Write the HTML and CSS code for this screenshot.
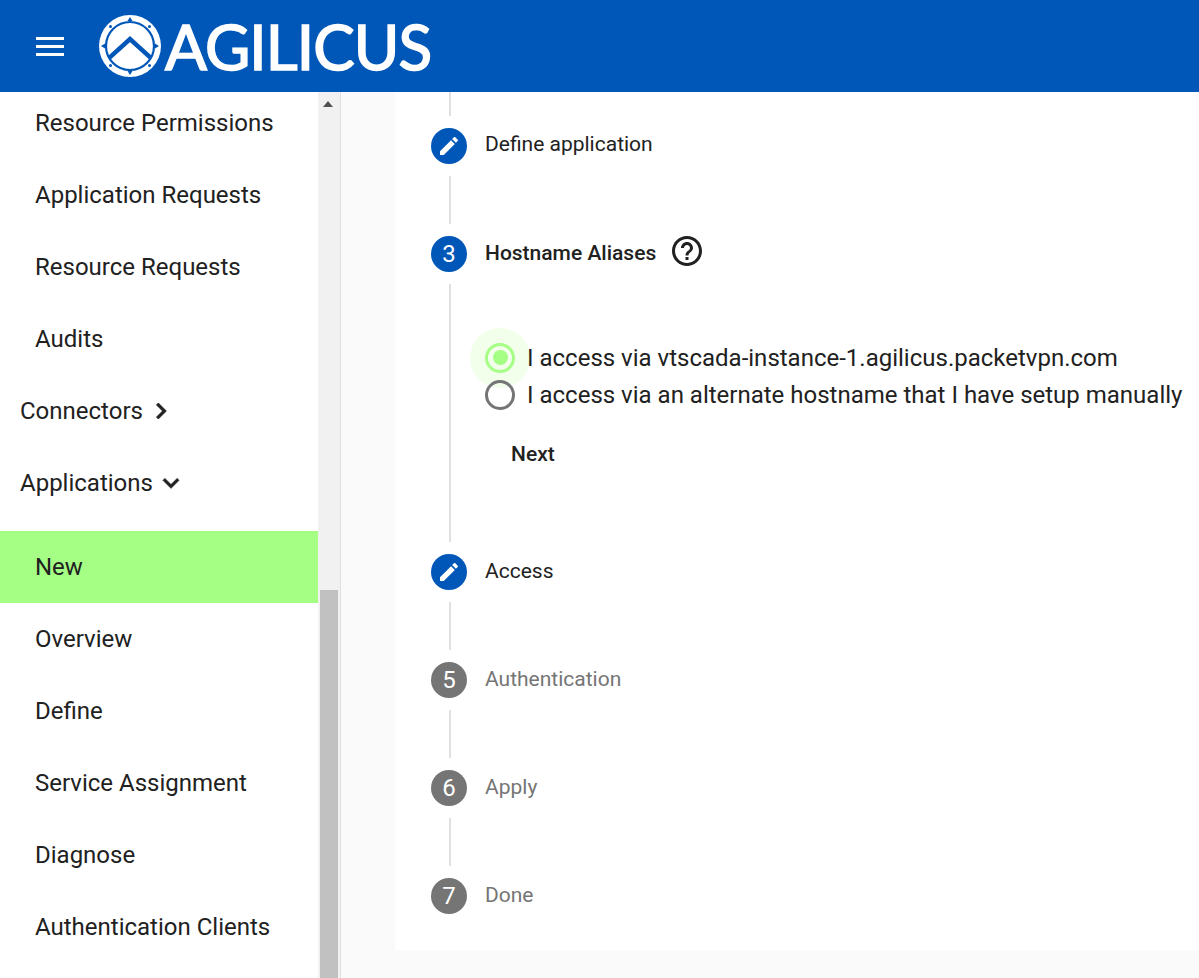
FILE: index.html
```html
<!DOCTYPE html>
<html lang="en">
<head>
  <meta charset="UTF-8">
  <meta name="viewport" content="width=device-width, initial-scale=1.0">
  <title>Agilicus</title>
  <link rel="stylesheet" href="styles.css">
</head>
<body>
  <header class="toolbar">
    <div class="menu-icon"><span></span><span></span><span></span></div>
    <svg class="logo-mark" width="64" height="64" viewBox="0 0 64 64">
      <circle cx="32" cy="32" r="31" fill="#fff"/>
      <circle cx="32" cy="32" r="24" fill="#fff" stroke="#0057b8" stroke-width="2.2"/>
      <path d="M11.5 43.6 L32 25 L52.5 43.6" fill="none" stroke="#0057b8" stroke-width="4.5"/>
      <path d="M32 3 l2.5 4 h-5z M32 61 l-2.5 -4 h5z M3 32 l4 -2.5 v5z M61 32 l-4 2.5 v-5z" fill="#0057b8"/>
      <circle cx="12.5" cy="12.5" r="1.5" fill="#0057b8"/>
      <circle cx="51.5" cy="12.5" r="1.5" fill="#0057b8"/>
      <circle cx="12.5" cy="51.5" r="1.5" fill="#0057b8"/>
      <circle cx="51.5" cy="51.5" r="1.5" fill="#0057b8"/>
    </svg>
    <span class="logo-text">AGILICUS</span>
  </header>

  <div class="layout">
    <nav class="sidebar">
      <div class="nav-list">
        <a class="nav-item sub">Resource Permissions</a>
        <a class="nav-item sub">Application Requests</a>
        <a class="nav-item sub">Resource Requests</a>
        <a class="nav-item sub">Audits</a>
        <a class="nav-item">Connectors
          <svg class="chevron" viewBox="0 0 24 24"><path d="M10 6L8.59 7.41 13.17 12l-4.58 4.59L10 18l6-6z"/></svg>
        </a>
        <a class="nav-item group-open">Applications
          <svg class="chevron" viewBox="0 0 24 24"><path d="M16.59 8.59L12 13.17 7.41 8.59 6 10l6 6 6-6z"/></svg>
        </a>
        <a class="nav-item sub active">New</a>
        <a class="nav-item sub">Overview</a>
        <a class="nav-item sub">Define</a>
        <a class="nav-item sub">Service Assignment</a>
        <a class="nav-item sub">Diagnose</a>
        <a class="nav-item sub">Authentication Clients</a>
      </div>
    </nav>
    <div class="scrollbar">
      <div class="scroll-up"></div>
      <div class="scroll-thumb"></div>
    </div>

    <main class="content">
      <div class="card">
        <div class="step-line first"></div>

        <div class="step">
          <div class="step-icon blue">
            <svg class="edit-icon" viewBox="0 0 24 24"><path d="M3 17.25V21h3.75L17.81 9.94l-3.75-3.75L3 17.25zM20.71 7.04c.39-.39.39-1.02 0-1.41l-2.34-2.34c-.39-.39-1.02-.39-1.41 0l-1.83 1.83 3.75 3.75 1.83-1.83z"/></svg>
          </div>
          <div class="step-label raised">Define application</div>
        </div>
        <div class="step-line"></div>

        <div class="step">
          <div class="step-icon blue">3</div>
          <div class="step-label current">Hostname Aliases</div>
          <svg class="help-icon" viewBox="0 0 24 24"><path d="M11 18h2v-2h-2v2zm1-16C6.48 2 2 6.48 2 12s4.48 10 10 10 10-4.48 10-10S17.52 2 12 2zm0 18c-4.41 0-8-3.59-8-8s3.59-8 8-8 8 3.59 8 8-3.59 8-8 8zm0-14c-2.21 0-4 1.79-4 4h2c0-1.1.9-2 2-2s2 .9 2 2c0 2-3 1.75-3 5h2c0-2.25 3-2.5 3-5 0-2.21-1.79-4-4-4z"/></svg>
        </div>
        <div class="step-body">
          <label class="radio-row">
            <span class="radio checked"></span>
            <span>I access via vtscada-instance-1.agilicus.packetvpn.com</span>
          </label>
          <label class="radio-row">
            <span class="radio"></span>
            <span>I access via an alternate hostname that I have setup manually</span>
          </label>
          <button class="next-btn">Next</button>
        </div>

        <div class="step">
          <div class="step-icon blue">
            <svg class="edit-icon" viewBox="0 0 24 24"><path d="M3 17.25V21h3.75L17.81 9.94l-3.75-3.75L3 17.25zM20.71 7.04c.39-.39.39-1.02 0-1.41l-2.34-2.34c-.39-.39-1.02-.39-1.41 0l-1.83 1.83 3.75 3.75 1.83-1.83z"/></svg>
          </div>
          <div class="step-label">Access</div>
        </div>
        <div class="step-line"></div>

        <div class="step">
          <div class="step-icon gray">5</div>
          <div class="step-label muted">Authentication</div>
        </div>
        <div class="step-line"></div>

        <div class="step">
          <div class="step-icon gray">6</div>
          <div class="step-label muted">Apply</div>
        </div>
        <div class="step-line"></div>

        <div class="step">
          <div class="step-icon gray">7</div>
          <div class="step-label muted">Done</div>
        </div>
      </div>
    </main>
  </div>
</body>
</html>
```

FILE: styles.css
```css
html, body {
  height: 100%;
  margin: 0;
  overflow: hidden;
}

body {
  font-family: Roboto, Arial, sans-serif;
  color: #212121;
  background: #fff;
  display: flex;
  flex-direction: column;
}

/* top bar */
.toolbar {
  height: 92px;
  flex: none;
  background: #0057b8;
  display: flex;
  align-items: center;
  padding-left: 36px;
}

.menu-icon {
  width: 28px;
  display: flex;
  flex-direction: column;
  gap: 5px;
  margin-right: 34px;
}

.menu-icon span {
  display: block;
  height: 3px;
  background: #fff;
}

.logo-mark {
  flex: none;
  margin-right: 3px;
}

.logo-text {
  font-family: Lato, Arial, sans-serif;
  font-size: 62px;
  font-weight: 400;
  color: #fff;
  line-height: 1;
  letter-spacing: -0.9px;
  -webkit-text-stroke: 1.6px #fff;
}

.layout {
  flex: 1;
  display: flex;
  min-height: 0;
}

/* side menu */
.sidebar {
  width: 318px;
  flex: none;
  overflow: hidden;
}

.nav-list {
  margin-top: -5px;
}

.nav-item {
  display: flex;
  align-items: center;
  height: 72px;
  padding-left: 20px;
  font-size: 24px;
}

.nav-item.sub {
  padding-left: 35px;
}

.nav-item.group-open {
  margin-bottom: 12px;
}

.nav-item.active {
  background: #a5ff85;
}

.chevron {
  width: 32px;
  height: 32px;
  fill: #212121;
  stroke: #212121;
  stroke-width: 0.6;
  flex: none;
  margin-left: 2px;
}

.scrollbar {
  width: 22px;
  flex: none;
  background: #f1f1f1;
  border-right: 1px solid #e0e0e0;
  position: relative;
}

.scroll-up {
  width: 0;
  margin: 9px 0 0 5px;
  border-left: 5px solid transparent;
  border-right: 5px solid transparent;
  border-bottom: 6px solid #505050;
}

.scroll-thumb {
  width: 18px;
  height: 388px;
  margin: 483px 0 0 2px;
  background: #c1c1c1;
}

/* stepper */
.content {
  flex: 1;
  min-width: 0;
  background: #fafafa;
  padding-left: 54px;
  overflow: hidden;
}

.card {
  background: #fff;
  height: 858px;
  padding-left: 36px;
}

.step {
  display: flex;
  align-items: center;
  height: 36px;
}

.step-icon {
  width: 36px;
  height: 36px;
  flex: none;
  border-radius: 50%;
  color: #fff;
  font-size: 24px;
  display: flex;
  align-items: center;
  justify-content: center;
  margin-right: 18px;
}

.step-icon.blue {
  background: #0057b8;
}

.step-icon.gray {
  background: #757575;
}

.edit-icon {
  width: 24px;
  height: 24px;
  fill: #fff;
}

.step-label {
  font-size: 21px;
  position: relative;
  top: -1px;
}

.step-label.raised {
  top: -2px;
}

.step-label.current {
  font-weight: 500;
}

.step-label.muted {
  color: #757575;
}

.help-icon {
  width: 36px;
  height: 36px;
  fill: #212121;
  margin-left: 13px;
  position: relative;
  top: -3px;
}

.step-line {
  height: 48px;
  margin: 12px 0 12px 18px;
  border-left: 2px solid #e0e0e0;
}

.step-line.first {
  height: 24px;
  margin-top: 0;
}

.step-body {
  margin: 12px 0 12px 18px;
  height: 258px;
  box-sizing: border-box;
  border-left: 2px solid #e0e0e0;
  padding: 55px 0 0 34px;
}

.radio-row {
  display: flex;
  align-items: center;
  height: 37px;
  font-size: 24px;
  white-space: nowrap;
}

.radio {
  width: 30px;
  height: 30px;
  box-sizing: border-box;
  flex: none;
  border: 3px solid #757575;
  border-radius: 50%;
  margin-right: 12px;
  position: relative;
}

.radio.checked {
  border-color: #a5ff85;
}

/* inner dot */
.radio.checked::before {
  content: '';
  position: absolute;
  top: 4.5px;
  left: 4.5px;
  width: 15px;
  height: 15px;
  border-radius: 50%;
  background: #a5ff85;
}

/* focus ripple */
.radio.checked::after {
  content: '';
  position: absolute;
  top: -18px;
  left: -18px;
  width: 60px;
  height: 60px;
  border-radius: 50%;
  background: rgba(165, 255, 133, 0.16);
}

.next-btn {
  display: block;
  margin: 29px 0 0 26px;
  padding: 0;
  border: none;
  background: none;
  font-family: inherit;
  font-size: 21px;
  font-weight: 500;
  color: #212121;
}
```
